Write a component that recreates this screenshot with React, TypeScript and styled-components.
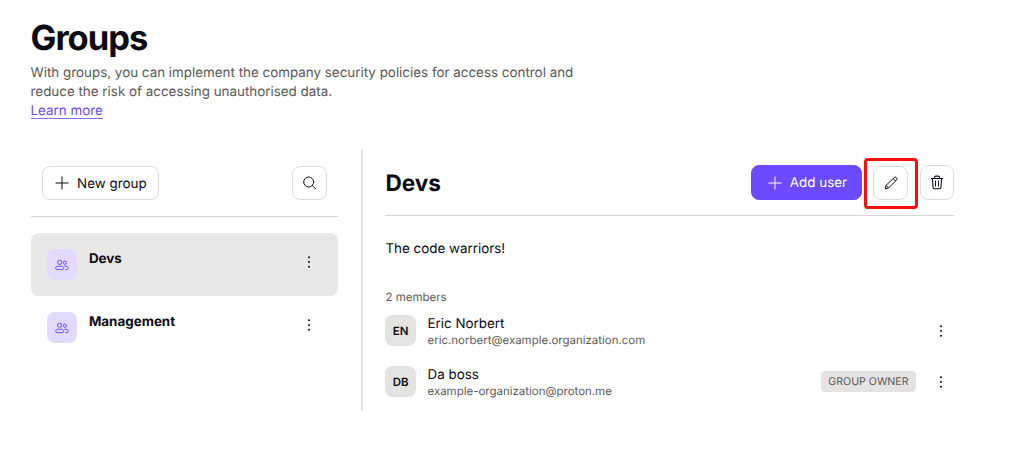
import React from 'react';
import styled, { createGlobalStyle, css } from 'styled-components';

interface Member {
  initials: string;
  name: string;
  email: string;
  isOwner?: boolean;
}

interface GroupItemProps {
  name: string;
  isSelected?: boolean;
}

const GROUPS: GroupItemProps[] = [
  { isSelected: true, name: 'Devs' },
  { name: 'Management' }
];

const MEMBERS: Member[] = [
  { email: 'eric.norbert@example.organization.com', initials: 'EN', name: 'Eric Norbert' },
  { email: 'example-organization@proton.me', initials: 'DB', isOwner: true, name: 'Da boss' }
];

const GlobalStyle = createGlobalStyle`
  *, *::before, *::after {
    box-sizing: border-box;
  }

  body {
    margin: 0;
    background: #fff;
    color: #0c0c14;
    font-family: Inter, 'Liberation Sans', sans-serif;
    font-size: 13.4px;
    line-height: 19px;
    text-rendering: geometricPrecision;
  }

  h1, h2, p, ul {
    margin: 0;
    padding: 0;
  }

  button {
    font: inherit;
    padding: 0;
    text-rendering: inherit;
  }
`;

const PlusIcon = () => (
  <svg width='14' height='14' viewBox='0 0 14 14' fill='none' stroke='currentColor' strokeWidth='1'>
    <path d='M7 .5v13M.5 7h13' />
  </svg>
);

const SearchIcon = () => (
  <svg width='14' height='14' viewBox='0 0 14 14' fill='none' stroke='currentColor' strokeWidth='1' strokeLinecap='round'>
    <circle cx='5.7' cy='6' r='5' />
    <path d='M9.3 9.6l3.5 3.3' />
  </svg>
);

const PencilIcon = () => (
  <svg width='14' height='14' viewBox='0 0 14 14' fill='none' stroke='currentColor' strokeWidth='1' strokeLinejoin='round'>
    <path d='M1.2 12.8l.8-3.4 8.3-7.9a1.3 1.3 0 0 1 1.9 0l.5.5a1.3 1.3 0 0 1 0 1.9l-8.2 8.1z' />
    <path d='M9.2 2.6l2.4 2.4M2 9.4l2.5 2.6' />
  </svg>
);

const TrashIcon = () => (
  <svg width='14' height='15' viewBox='0 0 14 15' fill='none' stroke='currentColor' strokeWidth='1.05' strokeLinejoin='round'>
    <path d='M1 3.4h12M4.6 3.2V2.1a1 1 0 0 1 1-1h2.8a1 1 0 0 1 1 1v1.1M2.4 3.4l.7 9a1.4 1.4 0 0 0 1.4 1.3h5a1.4 1.4 0 0 0 1.4-1.3l.7-9M5.5 5.5v6M8.5 5.5v6' />
  </svg>
);

const UsersIcon = () => (
  <svg width='14' height='12' viewBox='0 0 14 12' fill='none' stroke='currentColor' strokeWidth='1'>
    <circle cx='4.7' cy='3.3' r='2.1' />
    <circle cx='9.9' cy='3.7' r='1.6' />
    <path d='M3 7.2h3.3c1.4 0 2.3.9 2.3 2.2 0 .8-.4 1.2-1.1 1.2H1.8c-.7 0-1.1-.4-1.1-1.2 0-1.3.9-2.2 2.3-2.2z' />
    <path d='M9.3 7.2h1.7c1.3 0 2.3.9 2.3 2.2 0 .8-.4 1.2-1.1 1.2h-1.9' />
  </svg>
);

const DotsIcon = () => (
  <svg width='4' height='14' viewBox='0 0 4 14' fill='currentColor'>
    <circle cx='2' cy='2.2' r='1' />
    <circle cx='2' cy='7' r='1' />
    <circle cx='2' cy='11.8' r='1' />
  </svg>
);

const Page = styled.main`
  padding: 20px 70px 0 30.5px;
`;

const Title = styled.h1`
  font-size: 34.5px;
  font-weight: 700;
  line-height: 38px;
  letter-spacing: -1px;
`;

const Intro = styled.p`
  width: 560px;
  margin-top: 6px;
  color: #5c5958;
`;

const LearnMore = styled.a`
  display: block;
  width: fit-content;
  border-bottom: 1px solid #8a6eff;
  color: #6d4aff;
  line-height: 13px;
  margin-top: 3px;
`;

const Columns = styled.div`
  display: flex;
  height: 260.5px;
  margin-top: 31.4px;
`;

const Sidebar = styled.section`
  width: 332.5px;
  padding-right: 22.6px;
  border-right: 2px solid #e2e2e2;
`;

const Detail = styled.section`
  flex: 1;
  padding-left: 22.4px;
`;

const Toolbar = styled.div<{ $inset?: boolean }>`
  display: flex;
  align-items: center;
  height: ${({ $inset }) => ($inset ? '66.6px' : '65.6px')};
  padding: ${({ $inset }) => ($inset ? '0 11.6px' : '0')};
  border-bottom: 1px solid #d6d4d3;
`;

const Button = styled.button<{ $primary?: boolean }>`
  display: flex;
  align-items: center;
  gap: 8px;
  height: 34.4px;
  padding: 0 11px 0 12px;
  border: 1px solid #dedbd9;
  border-radius: 8px;
  background: #fff;
  color: #0c0c14;

  ${({ $primary }) => $primary && css`
    padding: 0 14px 0 15.5px;
    border-color: #6d4aff;
    background: #6d4aff;
    color: #fff;
  `}
`;

const ButtonLabel = styled.span`
  padding-top: 2px;
`;

const IconButton = styled(Button)`
  justify-content: center;
  width: 34.4px;
  padding: 0;
`;

const Spacer = styled.div`
  flex: 1;
`;

const Highlight = styled.div`
  display: flex;
  align-items: center;
  justify-content: center;
  width: 54px;
  height: 51px;
  margin: 1px 2px 0 1.5px;
  border: 3px solid #fb0d0d;
  border-radius: 4px;
`;

const GroupList = styled.ul`
  margin-top: 16.3px;
  list-style: none;
`;

const GroupRow = styled.li<{ $isSelected?: boolean }>`
  display: flex;
  align-items: flex-start;
  height: 63px;
  padding: 16px 27.5px 0 16.4px;
  border-radius: 8px;
  background: ${({ $isSelected }) => ($isSelected ? '#eae8e6' : 'transparent')};
`;

const Avatar = styled.div<{ $accent?: boolean }>`
  display: flex;
  align-items: center;
  justify-content: center;
  width: 30.6px;
  height: 30.6px;
  border-radius: 7.5px;
  background: ${({ $accent }) => ($accent ? '#e2dbff' : '#e5e3e1')};
  color: ${({ $accent }) => ($accent ? '#6d4aff' : '#0c0c14')};
  font-size: 11.5px;
  font-weight: 600;
`;

const Initials = styled.span`
  padding-top: 1px;
`;

const GroupName = styled.span`
  flex: 1;
  margin: 1px 0 0 11.4px;
  font-weight: 700;
`;

const DotsWrap = styled.span`
  display: flex;
  margin-top: 6px;
`;

const DetailTitle = styled.h2`
  padding-top: 1.5px;
  font-size: 22.6px;
  font-weight: 700;
`;

const Description = styled.p`
  margin-top: 24.4px;
`;

const Count = styled.p`
  margin-top: 29.8px;
  color: #5c5958;
  font-size: 11.5px;
  line-height: 16px;
`;

const MemberRow = styled.div`
  display: flex;
  align-items: center;
  height: 51px;
  padding-right: 11px;
`;

const MemberText = styled.div`
  display: flex;
  flex: 1;
  flex-direction: column;
  margin-left: 11.5px;
  padding-top: 2px;
`;

const MemberEmail = styled.span`
  margin-top: -1.5px;
  color: #5c5958;
  font-size: 11.48px;
  line-height: 16px;
`;

const Badge = styled.span`
  margin-right: 23px;
  padding: 0 7.5px;
  border-radius: 4px;
  background: #e5e3e1;
  color: #5c5958;
  font-size: 10.6px;
  line-height: 21px;
`;

function GroupItem ({ isSelected, name }: GroupItemProps): React.ReactElement<GroupItemProps> {
  return (
    <GroupRow $isSelected={isSelected}>
      <Avatar $accent>
        <UsersIcon />
      </Avatar>
      <GroupName>{name}</GroupName>
      <DotsWrap>
        <DotsIcon />
      </DotsWrap>
    </GroupRow>
  );
}

function MemberItem ({ email, initials, isOwner, name }: Member): React.ReactElement<Member> {
  return (
    <MemberRow>
      <Avatar>
        <Initials>{initials}</Initials>
      </Avatar>
      <MemberText>
        <span>{name}</span>
        <MemberEmail>{email}</MemberEmail>
      </MemberText>
      {isOwner && <Badge>GROUP OWNER</Badge>}
      <DotsIcon />
    </MemberRow>
  );
}

export default function App (): React.ReactElement {
  return (
    <Page>
      <GlobalStyle />
      <Title>Groups</Title>
      <Intro>
        With groups, you can implement the company security policies for access control and
        <br />
        reduce the risk of accessing unauthorised data.
      </Intro>
      <LearnMore>Learn more</LearnMore>
      <Columns>
        <Sidebar>
          <Toolbar $inset>
            <Button>
              <PlusIcon />
              <ButtonLabel>New group</ButtonLabel>
            </Button>
            <Spacer />
            <IconButton aria-label='Search'>
              <SearchIcon />
            </IconButton>
          </Toolbar>
          <GroupList>
            {GROUPS.map((group) => (
              <GroupItem
                key={group.name}
                {...group}
              />
            ))}
          </GroupList>
        </Sidebar>
        <Detail>
          <Toolbar>
            <DetailTitle>Devs</DetailTitle>
            <Spacer />
            <Button $primary>
              <PlusIcon />
              <ButtonLabel>Add user</ButtonLabel>
            </Button>
            <Highlight>
              <IconButton aria-label='Edit'>
                <PencilIcon />
              </IconButton>
            </Highlight>
            <IconButton aria-label='Delete'>
              <TrashIcon />
            </IconButton>
          </Toolbar>
          <Description>The code warriors!</Description>
          <Count>2 members</Count>
          {MEMBERS.map((member) => (
            <MemberItem
              key={member.email}
              {...member}
            />
          ))}
        </Detail>
      </Columns>
    </Page>
  );
}
